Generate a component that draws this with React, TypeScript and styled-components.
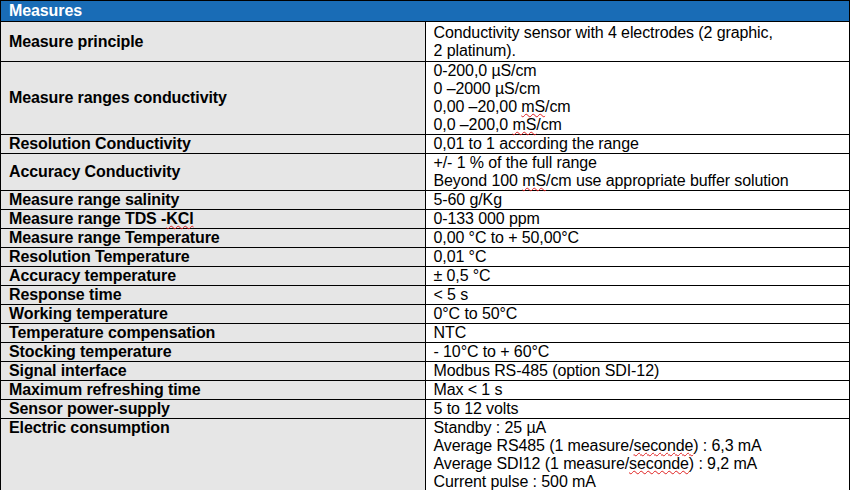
import React from 'react';
import styled, { createGlobalStyle } from 'styled-components';

const GlobalStyle = createGlobalStyle`
    html, body {
        margin: 0;
        padding: 0;
        background: #ffffff;
    }
    body {
        font-family: 'Liberation Sans', Arial, sans-serif;
        overflow: hidden;
    }
`;

const Table = styled.table`
    width: 850px;
    border-collapse: collapse;
    table-layout: fixed;
    font-family: 'Liberation Sans', Arial, sans-serif;
    font-size: 16px;
    line-height: 18px;
    letter-spacing: -0.1px;
    color: #000;
`;

const HeaderCell = styled.th`
    height: 20px;
    padding: 0 8px;
    border: 1px solid #000;
    background: #196cb6;
    color: #fff;
    font-weight: bold;
    text-align: left;
    vertical-align: middle;
`;

const LabelCell = styled.td<{ $top?: boolean }>`
    width: 418px;
    padding: 0 0 0 8px;
    border: 1px solid #000;
    background: #e6e6e6;
    font-weight: bold;
    white-space: nowrap;
    vertical-align: ${props => (props.$top ? 'top' : 'middle')};
`;

const ValueCell = styled.td<{ $padTop?: number; $padBottom?: number }>`
    padding: ${props => props.$padTop || 0}px 0 ${props => props.$padBottom || 0}px 8px;
    border: 1px solid #000;
    background: #fff;
    vertical-align: top;
`;

const Line = styled.div`
    white-space: nowrap;
`;

const Misspelled = styled.span`
    text-decoration: underline wavy #e02020;
    text-decoration-thickness: 1px;
    text-underline-offset: 1px;
`;

type Row = {
    label: React.ReactNode;
    lines: React.ReactNode[];
    padTop?: number;
    padBottom?: number;
    top?: boolean;
};

const rows: Row[] = [
    {
        label: 'Measure principle',
        lines: ['Conductivity sensor with 4 electrodes (2 graphic,', '2 platinum).'],
        padTop: 2,
        padBottom: 1,
    },
    {
        label: 'Measure ranges conductivity',
        lines: [
            '0-200,0 µS/cm',
            '0 –2000 µS/cm',
            <>
                0,00 –20,00 <Misspelled>mS</Misspelled>/cm
            </>,
            <>
                0,0 –200,0 <Misspelled>mS</Misspelled>/cm
            </>,
        ],
    },
    { label: 'Resolution Conductivity', lines: ['0,01 to 1 according the range'] },
    {
        label: 'Accuracy Conductivity',
        lines: [
            '+/- 1 % of the full range',
            <>
                Beyond 100 <Misspelled>mS</Misspelled>/cm use appropriate buffer solution
            </>,
        ],
    },
    { label: 'Measure range salinity', lines: ['5-60 g/Kg'] },
    {
        label: (
            <>
                Measure range TDS -<Misspelled>KCl</Misspelled>
            </>
        ),
        lines: ['0-133 000 ppm'],
    },
    { label: 'Measure range Temperature', lines: ['0,00 °C to + 50,00°C'] },
    { label: 'Resolution Temperature', lines: ['0,01 °C'] },
    { label: 'Accuracy temperature', lines: ['± 0,5 °C'] },
    { label: 'Response time', lines: ['< 5 s'] },
    { label: 'Working temperature', lines: ['0°C to 50°C'] },
    { label: 'Temperature compensation', lines: ['NTC'] },
    { label: 'Stocking temperature', lines: ['- 10°C to + 60°C'] },
    { label: 'Signal interface', lines: ['Modbus RS-485 (option SDI-12)'] },
    { label: 'Maximum refreshing time', lines: ['Max < 1 s'] },
    { label: 'Sensor power-supply', lines: ['5 to 12 volts'] },
    {
        label: 'Electric consumption',
        top: true,
        padBottom: 4,
        lines: [
            'Standby : 25 µA',
            <>
                Average RS485 (1 measure/<Misspelled>seconde</Misspelled>) : 6,3 mA
            </>,
            <>
                Average SDI12 (1 measure/<Misspelled>seconde</Misspelled>) : 9,2 mA
            </>,
            'Current pulse : 500 mA',
        ],
    },
];

const App = () => {
    return (
        <>
            <GlobalStyle />
            <Table>
                <thead>
                    <tr>
                        <HeaderCell colSpan={2}>Measures</HeaderCell>
                    </tr>
                </thead>
                <tbody>
                    {rows.map((row, i) => (
                        <tr key={i}>
                            <LabelCell $top={row.top}>{row.label}</LabelCell>
                            <ValueCell $padTop={row.padTop} $padBottom={row.padBottom}>
                                {row.lines.map((line, j) => (
                                    <Line key={j}>{line}</Line>
                                ))}
                            </ValueCell>
                        </tr>
                    ))}
                </tbody>
            </Table>
        </>
    );
};

export default App;
